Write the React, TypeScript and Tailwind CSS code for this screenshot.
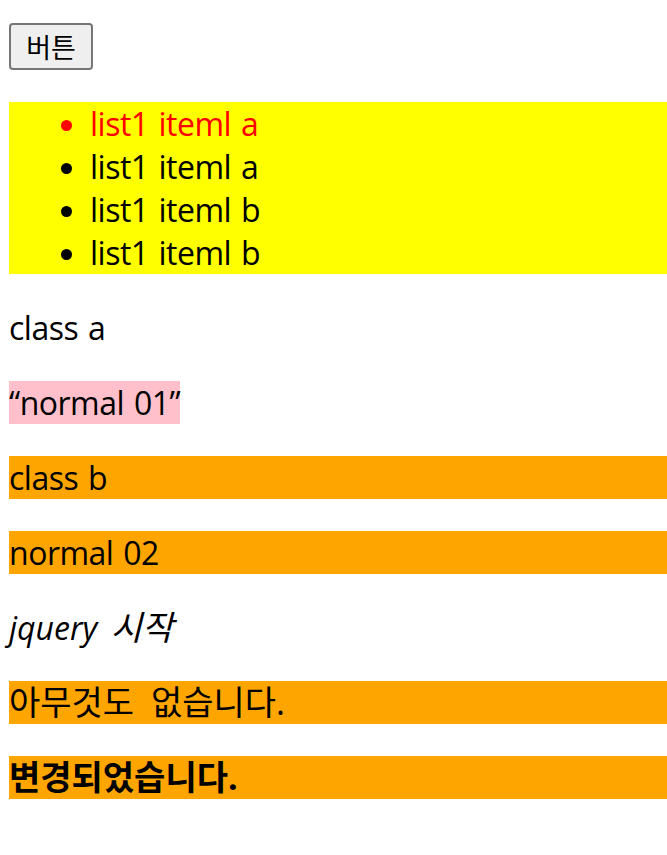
export default function App() {
  return (
    <div className="min-h-[855px] bg-white pl-[9px] pt-[23px] pb-8 text-black text-[32px] leading-[43px] tracking-[-0.5px] [word-spacing:2px] font-['Open_Sans','Noto_Sans_CJK_KR',sans-serif]">
      <button className="flex h-[47px] w-[84px] items-center justify-center rounded-[4px] border-2 border-[#767676] bg-[#efefef] text-[27px] tracking-normal font-['Noto_Sans_CJK_KR',sans-serif]">
        버튼
      </button>
      <ul className="mt-[32px] list-disc bg-[#ffff00] pl-[81px]">
        <li className="text-[#ff0000]">list1 iteml a</li>
        <li>list1 iteml a</li>
        <li>list1 iteml b</li>
        <li>list1 iteml b</li>
      </ul>
      <p className="mt-[32px]">class a</p>
      <p className="mt-[32px]">
        <span className="bg-[#ffc0cb]">“normal 01”</span>
      </p>
      <p className="mt-[32px] bg-[#ffa500]">class b</p>
      <p className="mt-[32px] bg-[#ffa500]">normal 02</p>
      <p className="mt-[32px] italic tracking-normal [word-spacing:5px]">
        jquery <span className="text-[34px]">시작</span>
      </p>
      <p className="mt-[32px] bg-[#ffa500] text-[34px] tracking-normal [word-spacing:8px]">아무것도 없습니다.</p>
      <p className="mt-[32px] bg-[#ffa500] text-[34px] tracking-normal font-bold">변경되었습니다.</p>
    </div>
  );
}
